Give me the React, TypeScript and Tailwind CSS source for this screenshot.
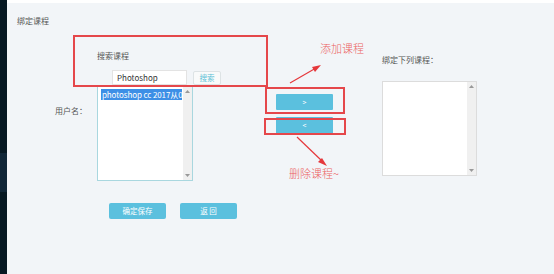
const FONT = { fontFamily: '"Noto Sans CJK SC", "Liberation Sans", sans-serif' };

const ScrollTrack = () => (
  <div className="w-[9px] h-full bg-[#f0f0f0] flex flex-col items-center justify-between py-[3px] text-[#999]">
    <svg width="5" height="3" viewBox="0 0 5 3">
      <path d="M0 3 L2.5 0 L5 3 Z" fill="currentColor" />
    </svg>
    <svg width="5" height="3" viewBox="0 0 5 3">
      <path d="M0 0 L2.5 3 L5 0 Z" fill="currentColor" />
    </svg>
  </div>
);

const Annotations = () => (
  <>
    <div className="absolute left-[66px] top-[32px] w-[195px] h-[52px] border-2 border-[#e5474b] pointer-events-none" />
    <div className="absolute left-[258px] top-[84px] w-[80px] h-[27px] border-2 border-[#e5474b] pointer-events-none" />
    <div className="absolute left-[257px] top-[115px] w-[82px] h-[17px] border-2 border-[#e5474b] pointer-events-none" />
    <span className="absolute left-[313px] top-[38px] text-[11px] leading-[14px] font-light text-[#ec5f5f]">添加课程</span>
    <span className="absolute left-[282px] top-[163px] text-[11px] leading-[14px] font-light text-[#ec5f5f]">删除课程~</span>
    <svg className="absolute left-0 top-0 pointer-events-none" width="547" height="271">
      <line x1="283" y1="80" x2="309" y2="65" stroke="#e5373b" strokeWidth="1.2" />
      <path d="M314 62 L305 64 L308 69 Z" fill="#e5373b" />
      <line x1="290" y1="134" x2="315" y2="158" stroke="#e5373b" strokeWidth="1.2" />
      <path d="M320 163 L311 159 L315 155 Z" fill="#e5373b" />
    </svg>
  </>
);

export default function App() {
  return (
    <div className="w-[554px] h-[274px] flex overflow-hidden" style={FONT}>
      <aside className="w-[7px] shrink-0 flex flex-col bg-[#061822]">
        <div className="h-[153px]" />
        <div className="h-[39px] bg-[#102637]" />
      </aside>

      <main className="flex-1 flex flex-col bg-[#f2f5f8]">
        <div className="h-[3px] bg-white shrink-0" />
        <div className="relative flex-1 flex flex-col">
          <h1 className="ml-[10px] mt-[13px] text-[8px] leading-[10px] text-[#555]">绑定课程</h1>

          <div className="flex items-start mt-[24px]">
            <label className="ml-[48px] w-[42px] mt-[56px] text-[8px] leading-[10px] text-[#555]">用户名：</label>

            <div className="w-[124px] flex flex-col">
              <p className="mt-[1px] text-[8px] leading-[10px] text-[#555]">搜索课程</p>
              <div className="mt-[9px] ml-[15px] flex items-center gap-[6px]">
                <div className="w-[75px] h-[15px] bg-white border border-[#e3e3e3] flex items-center pl-[4px] text-[8px] text-[#333]">
                  Photoshop
                </div>
                <button className="w-[28px] h-[14px] bg-[#f9fafa] border border-[#dde3e5] rounded-[2px] text-[7.5px] leading-none text-[#5bbfd6]">
                  搜索
                </button>
              </div>
              <div className="mt-[1px] w-[96px] h-[95px] bg-white border border-[#a9d7df] flex overflow-hidden">
                <div className="flex-1 min-w-0 pt-[2px] pl-[3px] pr-[1px]">
                  <div className="h-[11px] bg-[#3d8fe6] text-white text-[8px] leading-[11px] whitespace-nowrap px-[1px] tracking-[-0.1px]">
                    photoshop cc 2017从0开
                  </div>
                </div>
                <ScrollTrack />
              </div>
            </div>

            <div className="ml-[55px] mt-[44px] flex flex-col gap-[7px]">
              <button className="w-[57px] h-[16px] bg-[#5bc0de] text-white text-[7px] leading-none rounded-[1px]">&gt;</button>
              <button className="w-[57px] h-[17px] bg-[#5bc0de] text-white text-[7px] leading-none rounded-[1px]">&lt;</button>
            </div>

            <div className="ml-[49px] flex flex-col">
              <p className="mt-[5px] text-[8px] leading-[10px] text-[#555]">绑定下列课程：</p>
              <div className="mt-[16px] w-[95px] h-[95px] bg-white border border-[#dcdcdc] flex justify-end">
                <ScrollTrack />
              </div>
            </div>
          </div>

          <div className="ml-[102px] mt-[22px] flex gap-[14px]">
            <button className="w-[57px] h-[16px] bg-[#5bc0de] text-white text-[7.5px] leading-none rounded-[2px]">确定保存</button>
            <button className="w-[57px] h-[16px] bg-[#5bc0de] text-white text-[7.5px] leading-none rounded-[2px]">返 回</button>
          </div>

          <Annotations />
        </div>
      </main>
    </div>
  );
}
